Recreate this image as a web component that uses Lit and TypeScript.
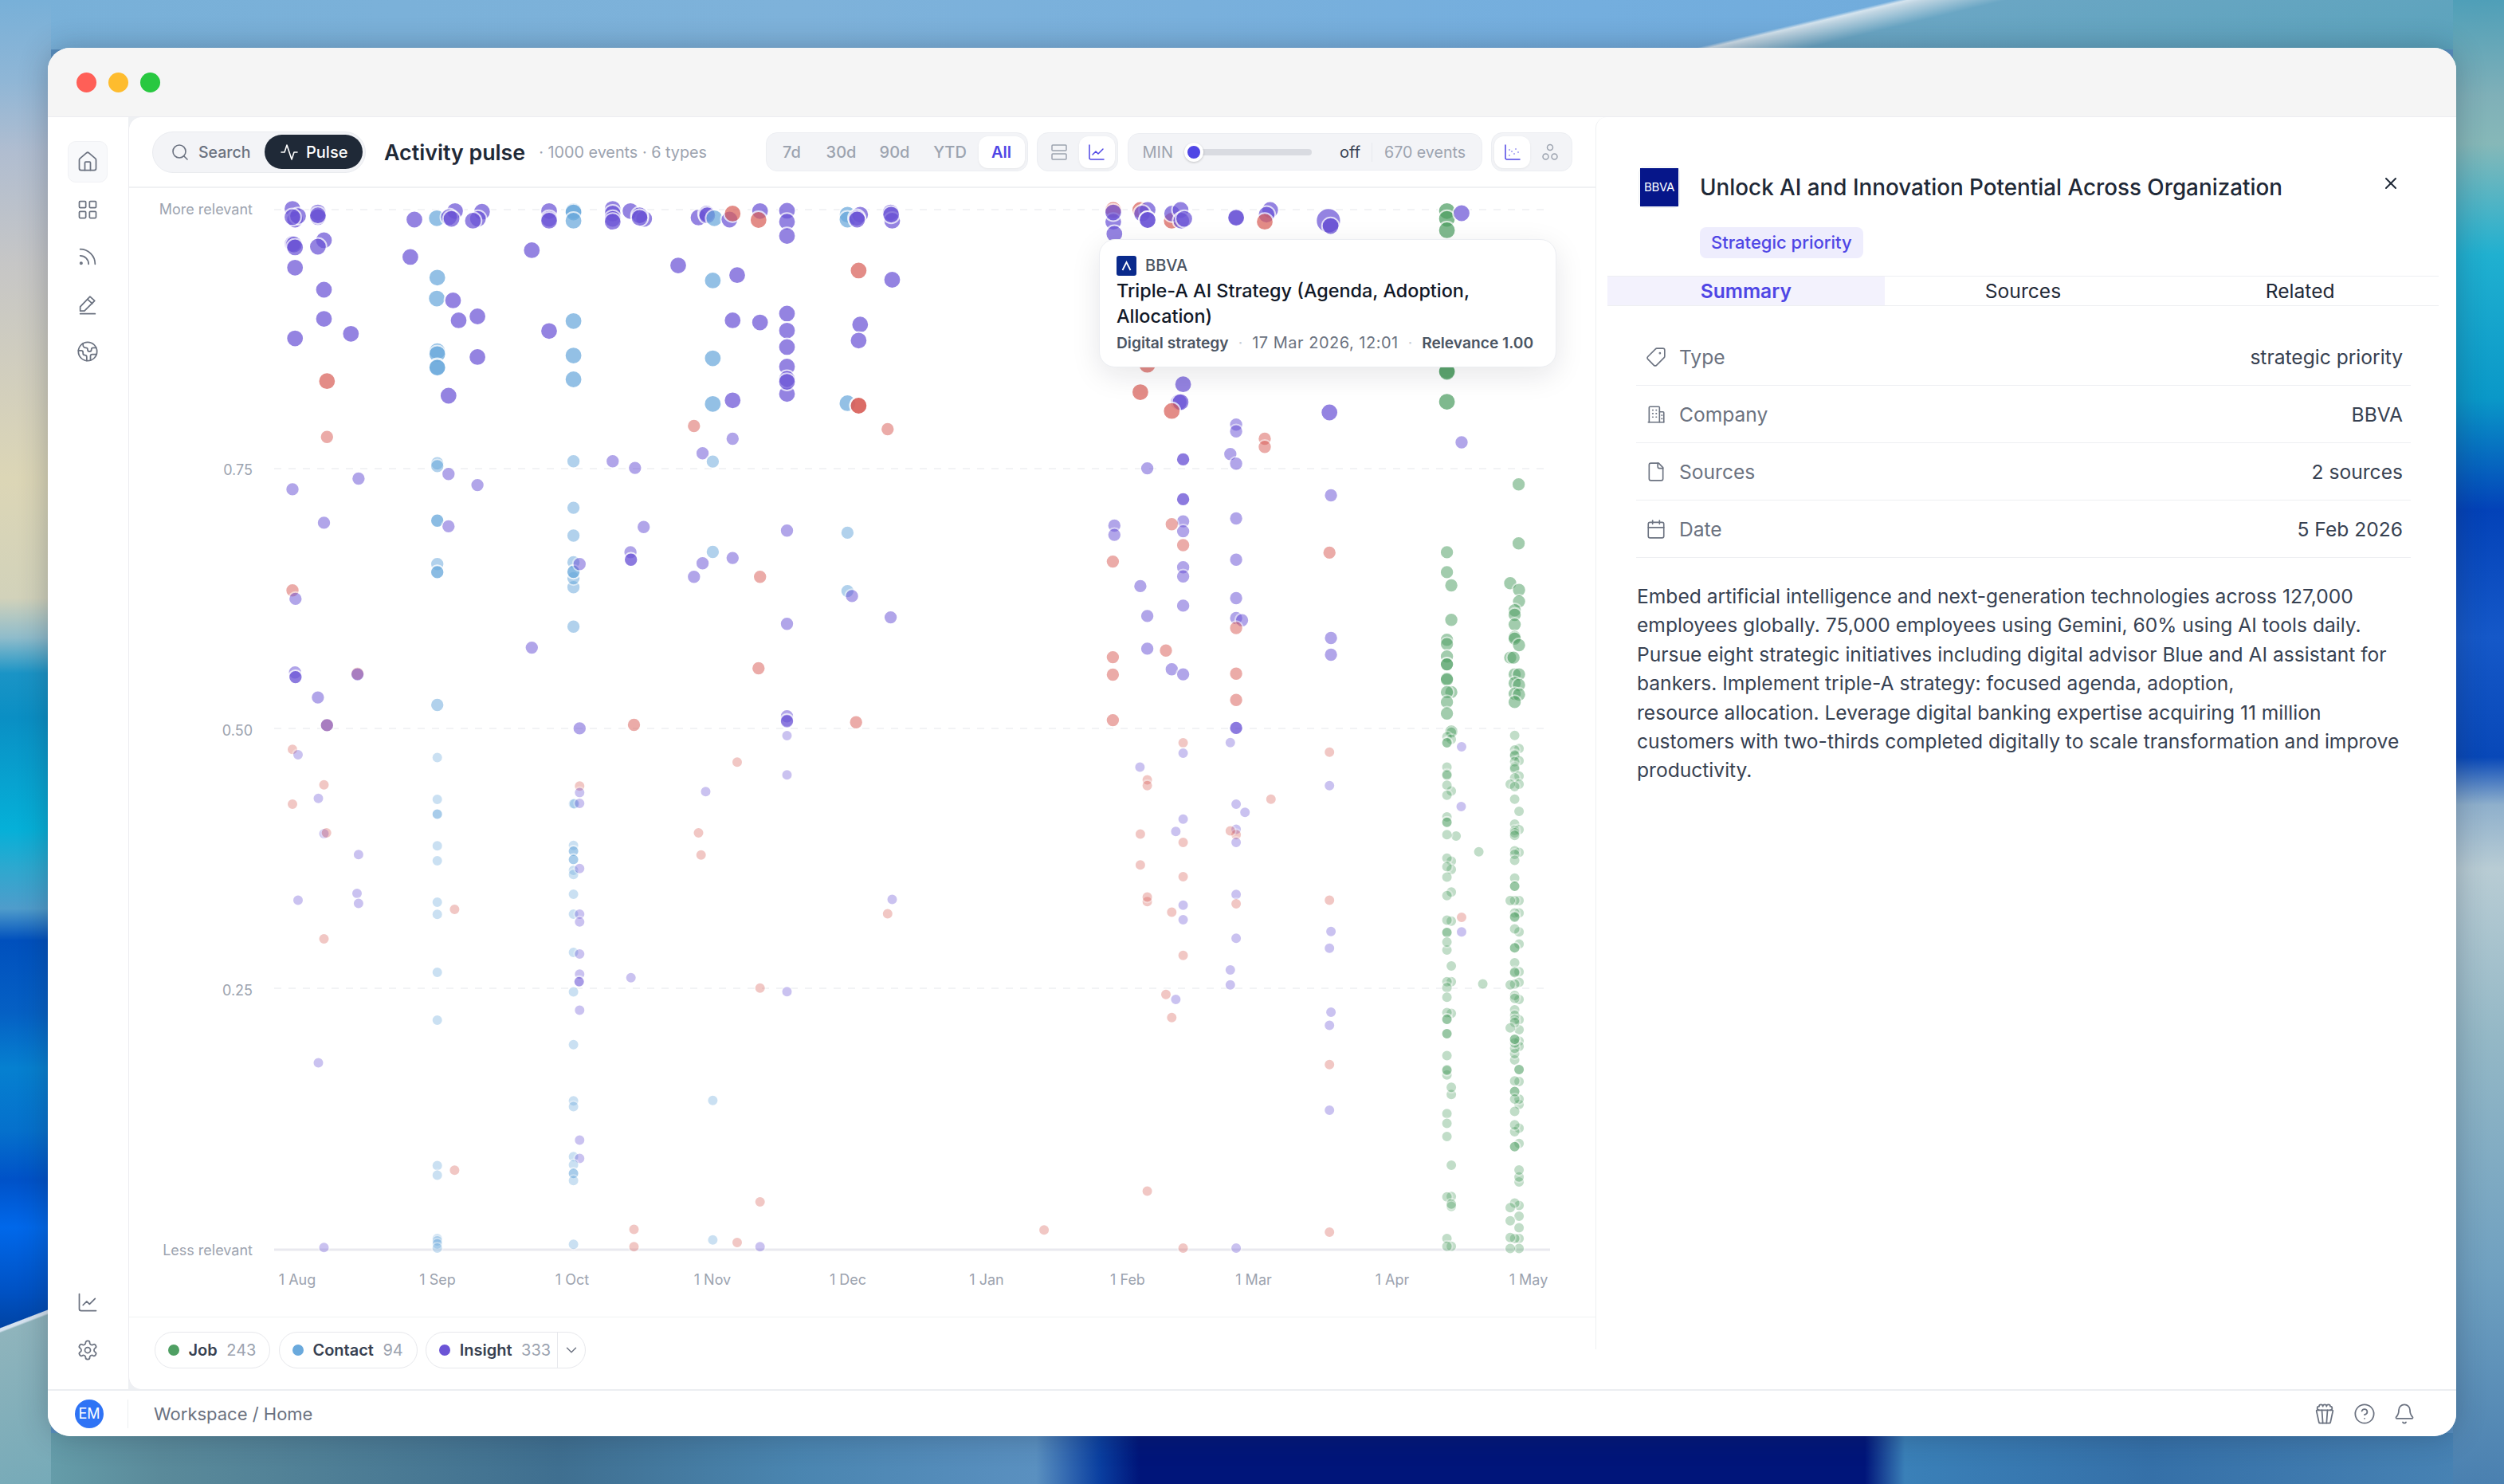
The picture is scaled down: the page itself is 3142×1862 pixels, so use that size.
import { LitElement, html, css, svg } from "lit";
import { customElement } from "lit/decorators.js";

const I: Record<string, any> = {
  home: svg`<path d="M15 21v-8a1 1 0 0 0-1-1h-4a1 1 0 0 0-1 1v8"/><path d="M3 10a2 2 0 0 1 .709-1.528l7-5.999a2 2 0 0 1 2.582 0l7 5.999A2 2 0 0 1 21 10v9a2 2 0 0 1-2 2H5a2 2 0 0 1-2-2z"/>`,
  grid: svg`<rect x="3" y="3" width="7" height="7" rx="1"/><rect x="14" y="3" width="7" height="7" rx="1"/><rect x="14" y="14" width="7" height="7" rx="1"/><rect x="3" y="14" width="7" height="7" rx="1"/>`,
  rss: svg`<path d="M4 11a9 9 0 0 1 9 9"/><path d="M4 4a16 16 0 0 1 16 16"/><circle cx="5" cy="19" r="1"/>`,
  pen: svg`<path d="M4 19v-4.5L14.5 3.5l5 4.5L8.5 19H4z"/><path d="M12 6.5l5 4.5"/><path d="M4 22h16"/>`,
  earth: svg`<path d="M21.54 15H17a2 2 0 0 0-2 2v4.54"/><path d="M7 3.34V5a3 3 0 0 0 3 3a2 2 0 0 1 2 2c0 1.1.9 2 2 2a2 2 0 0 0 2-2c0-1.1.9-2 2-2h3.17"/><path d="M11 21.95V18a2 2 0 0 0-2-2a2 2 0 0 1-2-2v-1a2 2 0 0 0-2-2H2.05"/><circle cx="12" cy="12" r="10"/>`,
  chart: svg`<path d="M3 3v16a2 2 0 0 0 2 2h16"/><path d="M7 15l4-4 3 3 6-6"/>`,
  gear: svg`<path d="M12.22 2h-.44a2 2 0 0 0-2 2v.18a2 2 0 0 1-1 1.73l-.43.25a2 2 0 0 1-2 0l-.15-.08a2 2 0 0 0-2.73.73l-.22.38a2 2 0 0 0 .73 2.73l.15.1a2 2 0 0 1 1 1.72v.51a2 2 0 0 1-1 1.74l-.15.09a2 2 0 0 0-.73 2.73l.22.38a2 2 0 0 0 2.73.73l.15-.08a2 2 0 0 1 2 0l.43.25a2 2 0 0 1 1 1.73V20a2 2 0 0 0 2 2h.44a2 2 0 0 0 2-2v-.18a2 2 0 0 1 1-1.73l.43-.25a2 2 0 0 1 2 0l.15.08a2 2 0 0 0 2.73-.73l.22-.39a2 2 0 0 0-.73-2.73l-.15-.08a2 2 0 0 1-1-1.74v-.5a2 2 0 0 1 1-1.74l.15-.09a2 2 0 0 0 .73-2.73l-.22-.38a2 2 0 0 0-2.73-.73l-.15.08a2 2 0 0 1-2 0l-.43-.25a2 2 0 0 1-1-1.73V4a2 2 0 0 0-2-2z"/><circle cx="12" cy="12" r="3"/>`,
  search: svg`<circle cx="11" cy="11" r="8"/><path d="m21 21-4.3-4.3"/>`,
  pulse: svg`<path d="M22 12h-4l-3 9L9 3l-3 9H2"/>`,
  rows: svg`<rect x="3" y="3" width="18" height="7" rx="1"/><rect x="3" y="14" width="18" height="7" rx="1"/>`,
  scatter: svg`<path d="M3 3v16a2 2 0 0 0 2 2h16"/><path d="M8 16h.01M11 11h.01M14 14h.01M16 8h.01M19 12h.01M8 9h.01"/>`,
  nodes: svg`<circle cx="12" cy="6" r="3.5"/><circle cx="6.5" cy="17.5" r="3.5"/><circle cx="17.5" cy="17.5" r="3.5"/>`,
  tag: svg`<g transform="translate(24 0) scale(-1 1)"><path d="M12.586 2.586A2 2 0 0 0 11.172 2H4a2 2 0 0 0-2 2v7.172a2 2 0 0 0 .586 1.414l8.704 8.704a2.426 2.426 0 0 0 3.42 0l6.58-6.58a2.426 2.426 0 0 0 0-3.42z"/><circle cx="7.5" cy="7.5" r=".5"/></g>`,
  company: svg`<path d="M4 21V4a1 1 0 0 1 1-1h10a1 1 0 0 1 1 1v17"/><path d="M3 21h18"/><path d="M16 9h4a1 1 0 0 1 1 1v11"/><path d="M8 7h.5M12 7h.5M8 11h.5M12 11h.5M8 15h.5M12 15h.5M18.5 13h.5M18.5 17h.5"/>`,
  file: svg`<path d="M15 2H6a2 2 0 0 0-2 2v16a2 2 0 0 0 2 2h12a2 2 0 0 0 2-2V7Z"/><path d="M14 2v4a2 2 0 0 0 2 2h4"/>`,
  cal: svg`<path d="M8 2v4"/><path d="M16 2v4"/><rect x="3" y="4" width="18" height="18" rx="2"/><path d="M3 10h18"/>`,
  close: svg`<path d="M18 6 6 18"/><path d="m6 6 12 12"/>`,
  popcorn: svg`<path d="M18 8a2 2 0 0 0 0-4 2 2 0 0 0-4 0 2 2 0 0 0-4 0 2 2 0 0 0-4 0 2 2 0 0 0 0 4"/><path d="M10 22 9 8"/><path d="m14 22 1-14"/><path d="M20 8c.5 0 .9.4.8 1l-2.6 12c-.1.5-.7 1-1.2 1H7c-.6 0-1.1-.4-1.2-1L3.2 9c-.1-.6.3-1 .8-1Z"/>`,
  help: svg`<circle cx="12" cy="12" r="10"/><path d="M9.09 9a3 3 0 0 1 5.83 1c0 2-3 3-3 3"/><path d="M12 17h.01"/>`,
  bell: svg`<path d="M10.268 21a2 2 0 0 0 3.464 0"/><path d="M3.262 15.326A1 1 0 0 0 4 17h16a1 1 0 0 0 .74-1.673C19.41 13.956 18 12.499 18 8A6 6 0 0 0 6 8c0 4.499-1.411 5.956-2.738 7.326"/>`,
  chev: svg`<path d="m6 9 6 6 6-6"/>`,
};
const ic = (n: string, s = 28, w = 1.5) =>
  html`<svg class="ic" width=${s} height=${s} viewBox="0 0 24 24" fill="none" stroke="currentColor" stroke-width=${w} stroke-linecap="round" stroke-linejoin="round">${I[n]}</svg>`;

const COL: Record<string, string> = { i: "#6b54d6", c: "#6aa9dc", r: "#d9605a", j: "#4f9f63" };

const CROPS: [number, number, number, number, string][] = [
  [300, 230, 1.568, 2.24, `i105,72 i110,102 i116,92 i105,95 i155,82 i155,95 i155,90 i105,170 i108,172 i110,180 i167,160 i155,178 i110,237 i167,299 i167,381 i110,436 i220,423
  i345,102 c389,98 i425,78 i413,95 i418,100 i478,80 i470,100 i460,105 i337,207 c390,265 c389,324 i421,329 i432,385 i469,374 c390,472 c390,480 c390,516 c390,518 i469,488 i412,597
  i610,78 i610,100 i610,105 c658,78 c658,82 c658,105 i576,188 c658,387 i610,415 c658,484 c658,551
  i735,72 i735,85 i735,100 i735,108 i770,78 i797,100 i788,90 i788,97 i904,96 i920,85 i921,90 c935,98 i965,102 r971,85 i1025,78 r1022,103
  i1078,77 i1078,108 i1078,148 i864,231 c932,273 i980,258 i971,385 i1025,391 i1078,366 i1078,414 i1078,460 i1078,515 i1078,592 i1078,550 i1078,558 c932,492 c932,620 i971,610
  c1197,88 c1197,102 i1222,88 i1215,97 i1216,102 i1282,82 i1285,105 i1283,88 r1219,245 i1285,271 i1222,397 i1219,442 c1197,618 r1219,625 r1219,625 r173,556
  r173,713 r895,682 r1276,691 i971,718 i912,759 c932,782 c390,787 c390,795 c658,781 i735,781 i779,800 i412,817 i235,830 i105,860 i469,848 c658,912 i167,954 c390,948 c390,948 i412,964 i796,966 c658,990 i1078,976 c1197,982 c932,1036 i971,1053 i912,1068 i770,1037 i771,1058 i771,1058 c390,1070 c390,1093 c390,1093 c658,1135 c658,1110 c658,1065 c658,1092 c658,1092 i670,1070 i895,1106 r1025,1106 r105,1144 i111,1168 c1197,1146 i1206,1160 i1078,1238 i1282,1220 c658,1246 i576,1305 i110,1375 i111,1388 i111,1388 r233,1378 i233,1380 i155,1445 c390,1466 r1022,1363 r173,1523 i173,1523 i670,1532 r777,1522 r1214,1515 i1078,1498 i1078,1510 i1078,1512 i1078,1552`],
  [1300, 230, 2.178, 2.24, `r211,75 i211,108 i211,82 i214,142 r285,75 i305,75 i290,85 i305,103 i305,103 r371,105 i372,85 i395,75 i397,105 i405,100 i547,95 i547,97 i640,75 i630,88 r625,108
  i805,120 j1123,78 j1123,100 j1123,132 i1163,84 r304,510 j1123,527 j1123,530 r285,587 i402,565 i390,615 i395,615 r371,640 i802,644 j1123,614
  i547,678 i547,697 r625,718 r625,741 i1163,728 i531,761 i547,788 i402,776 i402,776 i304,801 j1319,846 i806,877 i402,888 i402,888 i214,962 i214,988 i402,950 i402,978 r371,958 i547,942 r402,1017 r802,1038 j1319,1012 j1123,1037 r210,1063 i547,1058 i402,1079 i402,1105 j1123,1093 j1135,1130 j1296,1124 j1320,1143 j1320,1175 i285,1132 i547,1166 i402,1187 i304,1216 i547,1222 i563,1228 r547,1250 j1135,1227 j1308,1200 j1308,1213 j1308,1240 j1308,1275 j1308,1280 j1320,1298 j1123,1283 j1123,1295 i806,1278 i806,1325 i304,1308 r355,1313 r210,1332 j1296,1333 j1305,1333 j1123,1330 j1123,1352 j1123,1352 i371,1366 i402,1380 r210,1381 r547,1378 j1123,1392 j1123,1395 j1308,1380 j1320,1380 j1308,1405 j1320,1410 j1135,1430 j1123,1430 j1308,1435 j1320,1437 j1308,1458 j1123,1458 r547,1452 j1123,1490`],
  [300, 900, 1.568, 2.24, `r105,90 i116,105 c390,113 r980,126 i1078,162 r167,190 r670,193 i670,212 i156,228 r105,244 c390,231 c390,272 c390,272 c658,243 c660,243 i670,242 i918,209 r904,325 i167,327 r172,325 i235,386 r909,387 c390,361 c390,403 c658,360 c658,376 c658,376 c658,400 c658,400 c658,430 c658,442 i670,425 c658,497 i232,495 i116,514 i235,523 c390,520 c390,554 r424,540 c658,553 i670,553 i670,575 i1285,512 r1276,552 r167,623 c658,661 i670,665 c390,717 i670,722 i669,743 i669,743 i771,732 c658,772 r1025,761 i1078,771 i670,823 c390,851 c658,920 i156,971 c658,1078 c658,1094 c932,1077 i670,1188 c390,1260 r424,1273 c390,1287 c658,1235 i670,1240 c658,1258 c658,1282 c658,1282 c658,1302 r1025,1362 r777,1439 c932,1469 r980,1476 i1025,1488 r777,1488 c658,1481 i167,1490 c390,1465 c390,1472 c390,1480 c390,1492`],
  [1300, 900, 2.178, 2.24, `r210,8 i547,30 i547,30 r402,72 i402,101 i531,71 r802,98 j1308,51 j1135,40 j1135,42 j1123,55 j1135,62 j1123,72 j1123,72 i1163,83 j1320,88 j1308,92 j1308,105 j1308,108 j1320,122 j1308,125 j1308,140 j1308,145 j1123,140 j1123,160 j1123,163 j1320,165 j1308,170 j1320,188 j1296,188 j1308,195 j1135,207 j1123,191 j1123,219 j1308,230 j1320,264 i284,140 r304,176 r304,192 i802,192 i547,244 i571,267 r642,230 i1162,251 i402,286 j1123,280 j1123,295 j1123,295 i382,321 i547,315 r547,330 r531,319 i547,352 r285,328 r402,352 j1148,334 j1123,330 j1308,300 j1320,316 j1308,318 j1308,325 j1308,332 j1210,378 j1320,380 j1308,375 j1308,385 j1308,402 j1135,404 j1123,396 j1135,428 j1123,420 j1123,449 r285,415 r402,448 j1308,452 j1308,475 j1308,475 j1135,491 j1123,501 i547,498 r547,524 r304,518 r304,505 r802,514 j1320,515 j1308,515 j1296,515 i402,528 r371,548 i402,569 j1320,550 j1308,550 j1308,560 j1308,562 j1135,573 j1123,570 r1163,562 i1163,603 i806,602 j1123,605 j1123,605 j1320,603 j1308,595 i547,621 j1123,654 j1123,632 i802,649 j1320,637 j1308,648 j1308,648 r402,669 j1135,699 j1320,715 j1308,690 j1308,715 j1308,718 i531,710 i531,752 j1135,743 j1123,743 j1123,760 j1221,749 j1320,745 j1308,750 j1296,752 r355,779 i382,793 j1123,787 j1320,793 j1308,782 j1308,790 r371,844 i806,829 i802,866 j1135,832 j1123,830 j1123,849 j1123,849 j1123,889 j1123,889 j1320,850 j1320,878 j1308,822 j1308,838 j1308,850 j1308,858 j1296,873 j1320,910 j1320,925 j1308,963 j1308,945 j1308,930 j1308,915 j1308,905 j1308,905 r802,976 j1123,951 j1123,1005 j1123,990 j1123,992 j1320,990 j1320,990 j1320,1024 j1308,1022 j1135,1060 j1135,1040 j1320,1088 j1320,1073 j1308,1052 j1308,1052 j1308,1073 i802,1104 j1123,1114 j1123,1141 j1123,1178 j1308,1108 j1320,1155 j1308,1165 j1308,1145 j1320,1198 j1308,1207 j1308,1207 j1135,1259 j1320,1306 j1320,1292 j1320,1272 r304,1332 j1135,1347 j1123,1348 j1135,1375 j1135,1368 j1320,1372 j1308,1365 j1296,1378 j1320,1402 j1296,1415 j1320,1435 j1320,1465 j1308,1465 j1296,1462 j1123,1465 j1135,1487 j1123,1487 j1320,1493 j1296,1493 r22,1441 r802,1447 r402,1492 i547,1492`],
];

type Dot = { x: number; y: number; t: string; r: number; o: number };
const DOTS: Dot[] = [];
for (const [ox, oy, sx, sy, s] of CROPS) {
  for (const tok of s.trim().split(/\s+/)) {
    const [a, b] = tok.slice(1).split(",").map(Number);
    const y = oy + b / sy;
    const cls = y <= 520 ? [10.9, 0.72] : y <= 918 ? [8.7, 0.52] : [7, 0.35];
    DOTS.push({ x: ox + a / sx, y, t: tok[0], r: cls[0], o: cls[1] });
  }
}
DOTS.push({ x: 1300 + 799 / 2.178, y: 230 + 105 / 2.24, t: "i", r: 15.6, o: 0.72 });
DOTS.push({ x: 1300 + 805 / 2.178, y: 230 + 120 / 2.24, t: "i", r: 10.9, o: 0.72 });

const GRID: [number, number, string][] = [
  [263, 269, "More relevant"],
  [588, 596, "0.75"],
  [914, 923, "0.50"],
  [1240, 1249, "0.25"],
];
const DATES: [number, string][] = [
  [373, "1 Aug"], [549, "1 Sep"], [718, "1 Oct"], [894, "1 Nov"], [1064, "1 Dec"],
  [1238, "1 Jan"], [1415, "1 Feb"], [1573, "1 Mar"], [1747, "1 Apr"], [1918, "1 May"],
];

@customElement("app-root")
export class AppRoot extends LitElement {
  static styles = css`
    :host {
      display: block;
      width: 3142px;
      height: 1862px;
      overflow: hidden;
      font-family: Inter, "Liberation Sans", sans-serif;
      color: #374151;
      background:
        linear-gradient(159deg, transparent 23%, #d5e2ef 23.4%, #d5e2ef 24.6%, #8fb4bc 25.4%, #76aab8 100%) 0 1600px / 64px 262px no-repeat,
        linear-gradient(180deg, #78b0d8 0, #8fb6d6 100px, #b0bdd0 190px, #c6c6c6 330px, #dcd6b6 600px, #d2d2ba 750px, #8fbccb 800px, #1a94c6 845px, #0a8fc4 900px, #05b0d8 1040px, #2ea8cf 1090px, #4f9ccb 1140px, #0050bd 1180px, #0560c4 1270px, #0680d0 1340px, #0570cc 1420px, #0052c8 1480px, #0068ea 1540px, #0052c4 1620px, #003f9a 1680px) 0 0 / 64px 100% no-repeat,
        linear-gradient(180deg, #4f9fb8 0, #7fb0b8 120px, #86b8b8 180px, #20b0d0 320px, #0a98c8 500px, #0342b8 640px, #1558c8 800px, #0848b8 950px, #8fb0cc 1010px, #b8ccd4 1090px, #94b8c6 1300px, #6fa0c0 1600px, #4a80b0 1862px) 100% 0 / 64px 100% no-repeat,
        linear-gradient(90deg, #6aa5b0 0, #5a8a9a 200px, #3f6f90 700px, #4a85b0 1000px, #5a90c0 1300px, #0a3fa0 1380px, #00157a 1430px, #00157a 2340px, #3a80b8 2390px, #3570a8 2700px, #4a85b5 3142px) 0 100% / 100% 64px no-repeat,
        linear-gradient(166.5deg, transparent 27%, #d5e4ee 28.2%, #c0d5e2 29.6%, #6aa6c4 37%, #5aa3bb 100%) 2000px 0 / 1142px 62px no-repeat,
        linear-gradient(90deg, #78b0d8 0, #7eb2da 1000px, #74aede 2000px, #6aa8d8 3142px) 0 0 / 100% 62px no-repeat,
        #5a90c0;
    }
    .win {
      margin: 60px 0 0 60px;
      width: 3022px;
      height: 1742px;
      border-radius: 28px;
      overflow: hidden;
      display: flex;
      flex-direction: column;
      background: #fff;
      box-shadow: 0 0 36px rgba(30, 40, 60, 0.3);
      position: absolute;
    }
    .tbar {
      height: 87px;
      flex: none;
      background: #f5f5f5;
      display: flex;
      align-items: center;
      gap: 15px;
      padding-left: 36px;
      box-sizing: border-box;
      border-bottom: 1px solid #ececf0;
    }
    .tl { width: 25px; height: 25px; border-radius: 50%; }
    .body { flex: 1; min-height: 0; display: flex; background: #fff; }
    .side {
      width: 101px;
      flex: none;
      display: flex;
      flex-direction: column;
      align-items: center;
      gap: 7.6px;
      padding: 30px 2px 23px 0;
      box-sizing: border-box;
      color: #6b7280;
      background: #fff;
    }
    .sp { flex: 1; }
    .si { width: 50px; height: 52px; flex: none; display: flex; align-items: center; justify-content: center; border-radius: 10px; border: 1px solid transparent; box-sizing: border-box; }
    .si.on { background: #f8f9fb; border-color: #f1f2f5; }
    .content { flex: 1; min-width: 0; display: flex; background: #eef0f3; }
    .main {
      width: 1841px;
      flex: none;
      display: flex;
      flex-direction: column;
      background: #fff;
      border-left: 1px solid #ececf0;
      box-sizing: border-box;
      border-radius: 16px 0 0 16px;
    }
    .hdr {
      height: 89px;
      flex: none;
      display: flex;
      align-items: center;
      padding: 0 29px 0 29px;
      box-sizing: border-box;
      border-bottom: 2px solid #f0f1f3;
    }
    .switch {
      width: 268px;
      height: 52px;
      box-sizing: border-box;
      display: flex;
      align-items: center;
      background: #f3f4f7;
      border: 1.5px solid #e9ebef;
      border-radius: 26px;
      padding: 0 3px 0 22px;
      font-size: 19.5px;
      font-weight: 500;
      color: #6b7280;
    }
    .switch .ic { margin-right: 11px; }
    .pulse {
      margin-left: auto;
      height: 43px;
      width: 123px;
      box-sizing: border-box;
      background: #1f2937;
      color: #fff;
      border-radius: 22px;
      display: flex;
      align-items: center;
      padding-left: 19px;
      font-weight: 500;
      font-size: 20px;
    }
    .pulse .ic { margin-right: 9px; }
    h1 { margin: 0 0 0 23px; font-size: 26.8px; font-weight: 600; color: #1f2937; white-space: nowrap; }
    .sub { margin-left: 17px; font-size: 19.8px; color: #9ca3af; white-space: nowrap; }
    .ctrls { margin-left: auto; display: flex; align-items: center; gap: 11.5px; }
    .seg {
      height: 49px;
      box-sizing: border-box;
      display: flex;
      align-items: center;
      background: #f3f4f7;
      border: 1.5px solid #eceef2;
      border-radius: 14px;
      padding: 0 3px;
      font-size: 20px;
      font-weight: 500;
      color: #9ca3af;
      white-space: nowrap;
    }
    .seg.times {
      display: grid;
      grid-template-columns: 58px 66px 68px 71px 58px;
      width: 329px;
      text-align: center;
    }
    .seg .act {
      height: 40px;
      display: flex;
      align-items: center;
      justify-content: center;
      background: #fff;
      border-radius: 12px;
      color: #4f46e5;
      box-shadow: 0 1px 3px rgba(0, 0, 0, 0.06);
    }
    .seg > span.act { font-weight: 600; }
    .icons { width: 102px; }
    .icons .act { width: 46px; }
    .icons .off { width: 50px; display: flex; justify-content: center; }
    .slider { padding: 0 0 0 18px; width: 445px; height: 47px; font-weight: 400; }
    .slider .track {
      margin-left: 18px;
      width: 156px;
      height: 8px;
      border-radius: 4px;
      background: #d9dbe1;
      position: relative;
      flex: none;
    }
    .thumb {
      position: absolute;
      left: -4px;
      top: -8px;
      width: 24px;
      height: 24px;
      box-sizing: border-box;
      border-radius: 50%;
      background: #5046e5;
      border: 4px solid #fff;
      box-shadow: 0 1px 3px rgba(0, 0, 0, 0.2);
    }
    .slider .v { margin-left: 35px; color: #374151; width: 40px; }
    .slider .ev { border-left: 1.5px solid #e7e9ed; padding-left: 15px; font-size: 19.6px; }
    .chart { flex: 1; position: relative; min-height: 0; }
    .chart > svg { position: absolute; inset: 0; width: 100%; height: 100%; }
    .lbl { font-size: 18px; fill: #9ca3af; font-family: Inter, "Liberation Sans", sans-serif; }
    .tip {
      position: absolute;
      left: 1217px;
      top: 64px;
      width: 574px;
      height: 161px;
      box-sizing: border-box;
      background: #fff;
      border: 1px solid #eceef2;
      border-radius: 20px;
      box-shadow: 0 10px 36px rgba(20, 24, 40, 0.1);
      padding: 20px 21px;
    }
    .tip .co { display: flex; align-items: center; gap: 11px; font-size: 20px; font-weight: 500; color: #4b5563; height: 24px; }
    .tlogo { width: 25px; height: 25px; border-radius: 3px; background: #0a2a8c; display: flex; align-items: center; justify-content: center; color: #fff; }
    .tip .tt { font-size: 23.4px; line-height: 32px; font-weight: 500; color: #111827; margin-top: 4px; }
    .tip .meta { display: flex; align-items: center; margin-top: 5px; font-size: 19.2px; font-weight: 600; color: #4b5563; gap: 12px; white-space: nowrap; }
    .tip .meta .d { font-size: 20px; font-weight: 400; color: #6b7280; letter-spacing: 0.5px; }
    .tip .meta .s { color: #cbd0d8; font-weight: 400; }
    .legend {
      height: 91px;
      flex: none;
      border-top: 1px solid #f1f2f4;
      box-sizing: border-box;
      display: flex;
      align-items: flex-start;
      padding: 18px 0 0 32px;
      gap: 10.5px;
      border-radius: 0 0 0 16px;
    }
    .lp {
      height: 46px;
      box-sizing: border-box;
      border: 1.5px solid #e7e8ec;
      border-radius: 23px;
      display: flex;
      align-items: center;
      padding: 0 17px 0 16px;
      font-size: 20px;
      font-weight: 600;
      color: #374151;
      white-space: nowrap;
    }
    .ld { width: 14px; height: 14px; border-radius: 50%; margin-right: 11.5px; }
    .lp .n { color: #9ca3af; font-weight: 400; margin-left: 11.5px; }
    .lp .more { margin-left: 8px; border-left: 1.5px solid #e7e8ec; height: 100%; width: 34px; margin-right: -17px; display: flex; align-items: center; justify-content: center; color: #6b7280; }
    .detail { flex: 1; min-width: 0; background: #fff; display: flex; flex-direction: column; }
    .dcard { flex: 1; border-left: 1px solid #eef0f2; margin-bottom: 50px; border-radius: 14px 0 0 0; }
    .dhead { height: 199px; box-sizing: border-box; padding: 62px 58px 0 53px; }
    .dtop { display: flex; align-items: center; }
    .blogo {
      width: 52px; height: 52px; box-sizing: border-box; border: 1px solid #eef0f2; border-radius: 8px; padding: 1px; flex: none; display: flex;
    }
    .blogo span {
      flex: 1;
      background: #06168a;
      color: #fff;
      font-size: 15px;
      line-height: 48px;
      text-align: center;
      font-weight: 400;
      letter-spacing: -0.3px;
    }
    .dt { margin-left: 25px; font-size: 27.8px; font-weight: 500; color: #1f2937; white-space: nowrap; }
    .x { margin-left: auto; margin-top: -10px; margin-right: 12px; color: #1f2937; display: flex; }
    .badge {
      display: inline-block;
      margin: 24px 0 0 77px;
      height: 39px;
      line-height: 39px;
      padding: 0 14px;
      border-radius: 8px;
      background: #eeedfd;
      color: #4f46e5;
      font-size: 22px;
      font-weight: 500;
    }
    .tabs {
      margin: 0 22px 0 14px;
      height: 38px;
      box-sizing: border-box;
      display: grid;
      grid-template-columns: repeat(3, 1fr);
      border-top: 1.5px solid #eeeff2;
      border-bottom: 1.5px solid #eeeff2;
      font-size: 24.6px;
      font-weight: 400;
      color: #1f2937;
      text-align: center;
      line-height: 36px;
    }
    .tabs .a { background: #f3f2fd; color: #4f46e5; font-weight: 600; }
    .rows { margin: 28px 57px 0 50px; }
    .row {
      height: 72px;
      box-sizing: border-box;
      display: flex;
      align-items: center;
      border-bottom: 1.5px solid #eeeff2;
      padding: 0 10px 0 12px;
      font-size: 24.6px;
      color: #374151;
    }
    .row .ic { color: #6b7280; margin-right: 16px; }
    .row .k { color: #6b7280; }
    .row .val { margin-left: auto; }
    p {
      margin: 30px 50px 0 51px;
      font-size: 24.6px;
      line-height: 36.4px;
      color: #374151;
    }
    .foot {
      height: 59px;
      flex: none;
      box-sizing: border-box;
      border-top: 2px solid #eceef1;
      display: flex;
      align-items: center;
      padding: 0 51px 0 34px;
      background: #fff;
      position: relative;
    }
    .av {
      width: 36px; height: 36px; border-radius: 50%; background: #2f73f5; color: #fff; font-size: 18px;
      display: flex; align-items: center; justify-content: center; flex: none;
    }
    .vd { width: 1px; height: 36px; background: #eceef1; margin-left: 30px; }
    .crumb { margin-left: 32px; font-size: 22px; color: #6b7280; }
    .ficons { margin-left: auto; display: flex; gap: 22px; color: #6b7280; }
    .ic { display: block; flex: none; }
  `;

  render() {
    return html`
      <div class="win">
        <div class="tbar">
          <span class="tl" style="background:#ff5f57"></span>
          <span class="tl" style="background:#febc2e"></span>
          <span class="tl" style="background:#28c840"></span>
        </div>
        <div class="body">
          <nav class="side">
            <div class="si on">${ic("home")}</div>
            <div class="si">${ic("grid")}</div>
            <div class="si">${ic("rss")}</div>
            <div class="si">${ic("pen")}</div>
            <div class="si">${ic("earth")}</div>
            <div class="sp"></div>
            <div class="si">${ic("chart")}</div>
            <div class="si">${ic("gear")}</div>
          </nav>
          <div class="content">
            <section class="main">
              <header class="hdr">
                <div class="switch">
                  ${ic("search", 24, 1.6)}<span>Search</span>
                  <div class="pulse">${ic("pulse", 24, 1.6)}Pulse</div>
                </div>
                <h1>Activity pulse</h1>
                <span class="sub">· 1000 events · 6 types</span>
                <div class="ctrls">
                  <div class="seg times">
                    <span>7d</span><span>30d</span><span>90d</span><span>YTD</span><span class="act">All</span>
                  </div>
                  <div class="seg icons">
                    <div class="off">${ic("rows", 24)}</div>
                    <div class="act">${ic("chart", 24)}</div>
                  </div>
                  <div class="seg slider">
                    <span>MIN</span>
                    <div class="track"><div class="thumb"></div></div>
                    <span class="v">off</span>
                    <span class="ev">670 events</span>
                  </div>
                  <div class="seg icons">
                    <div class="act">${ic("scatter", 24)}</div>
                    <div class="off">${ic("nodes", 24)}</div>
                  </div>
                </div>
              </header>
              <div class="chart">
                <svg viewBox="162 236 1840 1416" fill="none">
                  ${GRID.map(
                    ([y, ly, t]) => svg`
                      <line x1="344" x2="1945" y1=${y} y2=${y} stroke="#f2f3f5" stroke-width="2" stroke-dasharray="9 9"></line>
                      <text class="lbl" x="317" y=${ly} text-anchor="end">${t}</text>`
                  )}
                  <line x1="344" x2="1945" y1="1568" y2="1568" stroke="#e9e9ef" stroke-width="3"></line>
                  <text class="lbl" x="317" y="1575" text-anchor="end">Less relevant</text>
                  ${DATES.map(([x, t]) => svg`<text class="lbl" x=${x} y="1612" text-anchor="middle">${t}</text>`)}
                  ${DOTS.map(
                    (d) => svg`<circle cx=${d.x.toFixed(1)} cy=${d.y.toFixed(1)} r=${d.r} fill=${COL[d.t]} stroke="#fff" stroke-width="2" opacity=${d.o}></circle>`
                  )}
                </svg>
                <div class="tip">
                  <div class="co">
                    <span class="tlogo"><svg width="15" height="15" viewBox="0 0 15 15" fill="none" stroke="currentColor" stroke-width="1.8"><path d="M2.5 13 7.5 3l5 10"/></svg></span>
                    BBVA
                  </div>
                  <div class="tt">Triple-A AI Strategy (Agenda, Adoption, Allocation)</div>
                  <div class="meta">
                    <span>Digital strategy</span><span class="s">·</span>
                    <span class="d">17 Mar 2026, 12:01</span><span class="s">·</span>
                    <span>Relevance 1.00</span>
                  </div>
                </div>
              </div>
              <div class="legend">
                <div class="lp"><span class="ld" style="background:#4f9f63"></span>Job<span class="n">243</span></div>
                <div class="lp"><span class="ld" style="background:#6aa9dc"></span>Contact<span class="n">94</span></div>
                <div class="lp"><span class="ld" style="background:#6b54d6"></span>Insight<span class="n">333</span><span class="more">${ic("chev", 22)}</span></div>
              </div>
            </section>
            <aside class="detail">
              <div class="dcard">
                <div class="dhead">
                  <div class="dtop">
                    <div class="blogo"><span>BBVA</span></div>
                    <div class="dt">Unlock AI and Innovation Potential Across Organization</div>
                    <div class="x">${ic("close", 24, 2)}</div>
                  </div>
                  <div class="badge">Strategic priority</div>
                </div>
                <div class="tabs">
                  <div class="a">Summary</div><div>Sources</div><div>Related</div>
                </div>
                <div class="rows">
                  <div class="row">${ic("tag", 26)}<span class="k">Type</span><span class="val">strategic priority</span></div>
                  <div class="row">${ic("company", 26)}<span class="k">Company</span><span class="val">BBVA</span></div>
                  <div class="row">${ic("file", 26)}<span class="k">Sources</span><span class="val">2 sources</span></div>
                  <div class="row">${ic("cal", 26)}<span class="k">Date</span><span class="val">5 Feb 2026</span></div>
                </div>
                <p>Embed artificial intelligence and next-generation technologies across 127,000 employees globally. 75,000 employees using Gemini, 60% using AI tools daily. Pursue eight strategic initiatives including digital advisor Blue and AI assistant for bankers. Implement triple-A strategy: focused agenda, adoption, resource&nbsp;allocation. Leverage digital banking expertise acquiring 11 million customers with two-thirds completed digitally to scale transformation and improve productivity.</p>
              </div>
            </aside>
          </div>
        </div>
        <footer class="foot">
          <div class="av">EM</div>
          <div class="vd"></div>
          <div class="crumb">Workspace / Home</div>
          <div class="ficons">${ic("popcorn")}${ic("help")}${ic("bell")}</div>
        </footer>
      </div>
    `;
  }
}
